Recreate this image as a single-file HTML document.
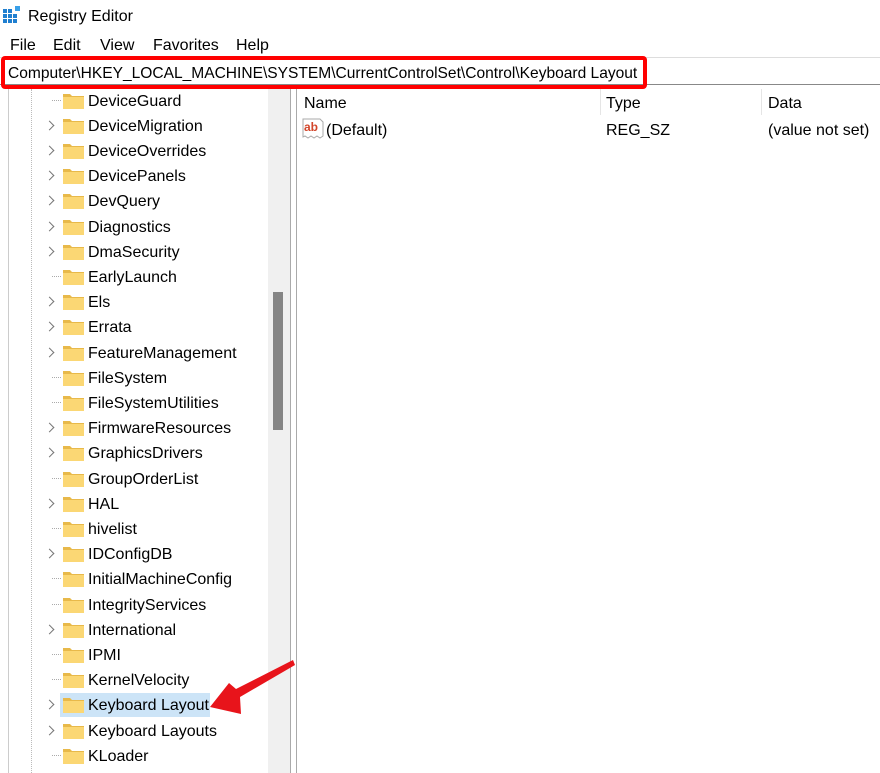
<!DOCTYPE html>
<html style="overflow:hidden"><head><style>
*{margin:0;padding:0;box-sizing:border-box}
html,body{width:880px;height:773px;overflow:hidden}
body{background:#fff;font-family:"Liberation Sans",sans-serif;color:#000;position:relative}
.a{position:absolute;white-space:nowrap}
.t{font-size:16px}
.row{position:absolute;left:0;height:25px;width:268px}
.fold{position:absolute;left:63px;width:21px;height:16px}
.lbl{position:absolute;left:88px;font-size:16px;line-height:16px}
.chev{position:absolute;left:46px;width:7px;height:7px;border-right:1.3px solid #777;border-top:1.3px solid #777;transform:rotate(45deg)}
.stub{position:absolute;left:52px;width:9px;border-top:1px dotted #aaa}
</style></head><body>
<svg class="a" style="left:2px;top:5px" width="20" height="20" viewBox="0 0 20 20">
<g fill="#1f7fd0"><rect x="1" y="4" width="4" height="4"/><rect x="6" y="4" width="4" height="4"/><rect x="1" y="9" width="4" height="4"/><rect x="6" y="9" width="4" height="4"/><rect x="11" y="9" width="4" height="4"/><rect x="1" y="14" width="4" height="4"/><rect x="6" y="14" width="4" height="4"/><rect x="11" y="14" width="4" height="4"/></g>
<rect x="13" y="1" width="5" height="5" fill="#3aa0e8"/></svg>
<div class="a t" style="left:28px;top:8px">Registry Editor</div>
<div class="a t" style="left:10px;top:37px">File</div>
<div class="a t" style="left:53px;top:37px">Edit</div>
<div class="a t" style="left:100px;top:37px">View</div>
<div class="a t" style="left:153px;top:37px">Favorites</div>
<div class="a t" style="left:236px;top:37px">Help</div>
<div class="a" style="left:0;top:57px;width:880px;height:1px;background:#ddd"></div>
<div class="a" style="left:0;top:84px;width:880px;height:1px;background:#888"></div>
<div class="a" style="left:1px;top:56px;width:646px;height:33px;border:4px solid #f00;border-radius:4px"></div>
<div class="a t" style="left:8px;top:65px;transform:scaleX(0.972);transform-origin:0 0">Computer\HKEY_LOCAL_MACHINE\SYSTEM\CurrentControlSet\Control\Keyboard Layout</div>
<div class="a" style="left:8px;top:89px;width:1px;height:684px;background:#ccc"></div>
<div class="a" style="left:31px;top:89px;height:684px;border-left:1px dotted #bbb"></div>
<div class="a" style="left:268px;top:89px;width:22px;height:684px;background:#f0f0f0"></div>
<div class="a" style="left:273px;top:292px;width:10px;height:138px;background:#858585"></div>
<div class="a" style="left:290px;top:89px;width:1px;height:684px;background:#aaa"></div>
<div class="a" style="left:296px;top:89px;width:1px;height:684px;background:#aaa"></div>
<div class="a" style="left:60px;top:693px;width:150px;height:24px;background:#cce4f7"></div>
<div id="tree" class="a" style="left:0;top:0;width:268px;height:773px;overflow:hidden"></div>
<div class="a t" style="left:304px;top:95px">Name</div>
<div class="a" style="left:600px;top:89px;width:1px;height:26px;background:#e5e5e5"></div>
<div class="a t" style="left:606px;top:95px">Type</div>
<div class="a" style="left:761px;top:89px;width:1px;height:26px;background:#e5e5e5"></div>
<div class="a t" style="left:768px;top:95px">Data</div>
<svg class="a" style="left:302px;top:118px" width="22" height="22" viewBox="0 0 22 22"><path d="M1 1h17l3 3v14l-3 2-3-2-3 2-3-2-3 2-3-2-2 1z" fill="#fff" stroke="#aaa"/><text x="2" y="13" font-size="12" font-weight="bold" fill="#d2452a" font-family="Liberation Sans">ab</text></svg>
<div class="a t" style="left:326px;top:122px">(Default)</div>
<div class="a t" style="left:606px;top:122px">REG_SZ</div>
<div class="a t" style="left:768px;top:122px">(value not set)</div>
<svg class="a" style="left:0;top:0" width="880" height="773"><path d="M293 660 L295 665 L240 697 L241 714 L210 707 L229 683 L236 689 Z" fill="#e8141b"/></svg>
<script>
var r=[["DeviceGuard",0],["DeviceMigration",1],["DeviceOverrides",1],["DevicePanels",1],["DevQuery",1],["Diagnostics",1],["DmaSecurity",1],["EarlyLaunch",0],["Els",1],["Errata",1],["FeatureManagement",1],["FileSystem",0],["FileSystemUtilities",0],["FirmwareResources",1],["GraphicsDrivers",1],["GroupOrderList",0],["HAL",1],["hivelist",0],["IDConfigDB",1],["InitialMachineConfig",0],["IntegrityServices",0],["International",1],["IPMI",0],["KernelVelocity",0],["Keyboard Layout",1],["Keyboard Layouts",1],["KLoader",0],["",0]];
var h="";
r.forEach(function(e,i){var c=100+25.2*i;
h+='<div class="row" style="top:'+(c-12.5)+'px">';
if(e[1])h+='<div class="chev" style="top:9px"></div>';else h+='<div class="stub" style="top:12px"></div>';
h+='<svg class="fold" style="top:5px" viewBox="0 0 21 16"><path d="M0 1h7l2 2h12v13H0z" fill="#e8b94a"/><rect x="0" y="4" width="21" height="12" fill="#fbd774"/></svg>';
h+='<div class="lbl" style="top:6px">'+e[0]+'</div></div>';});
document.getElementById("tree").innerHTML=h;
</script>
</body></html>
